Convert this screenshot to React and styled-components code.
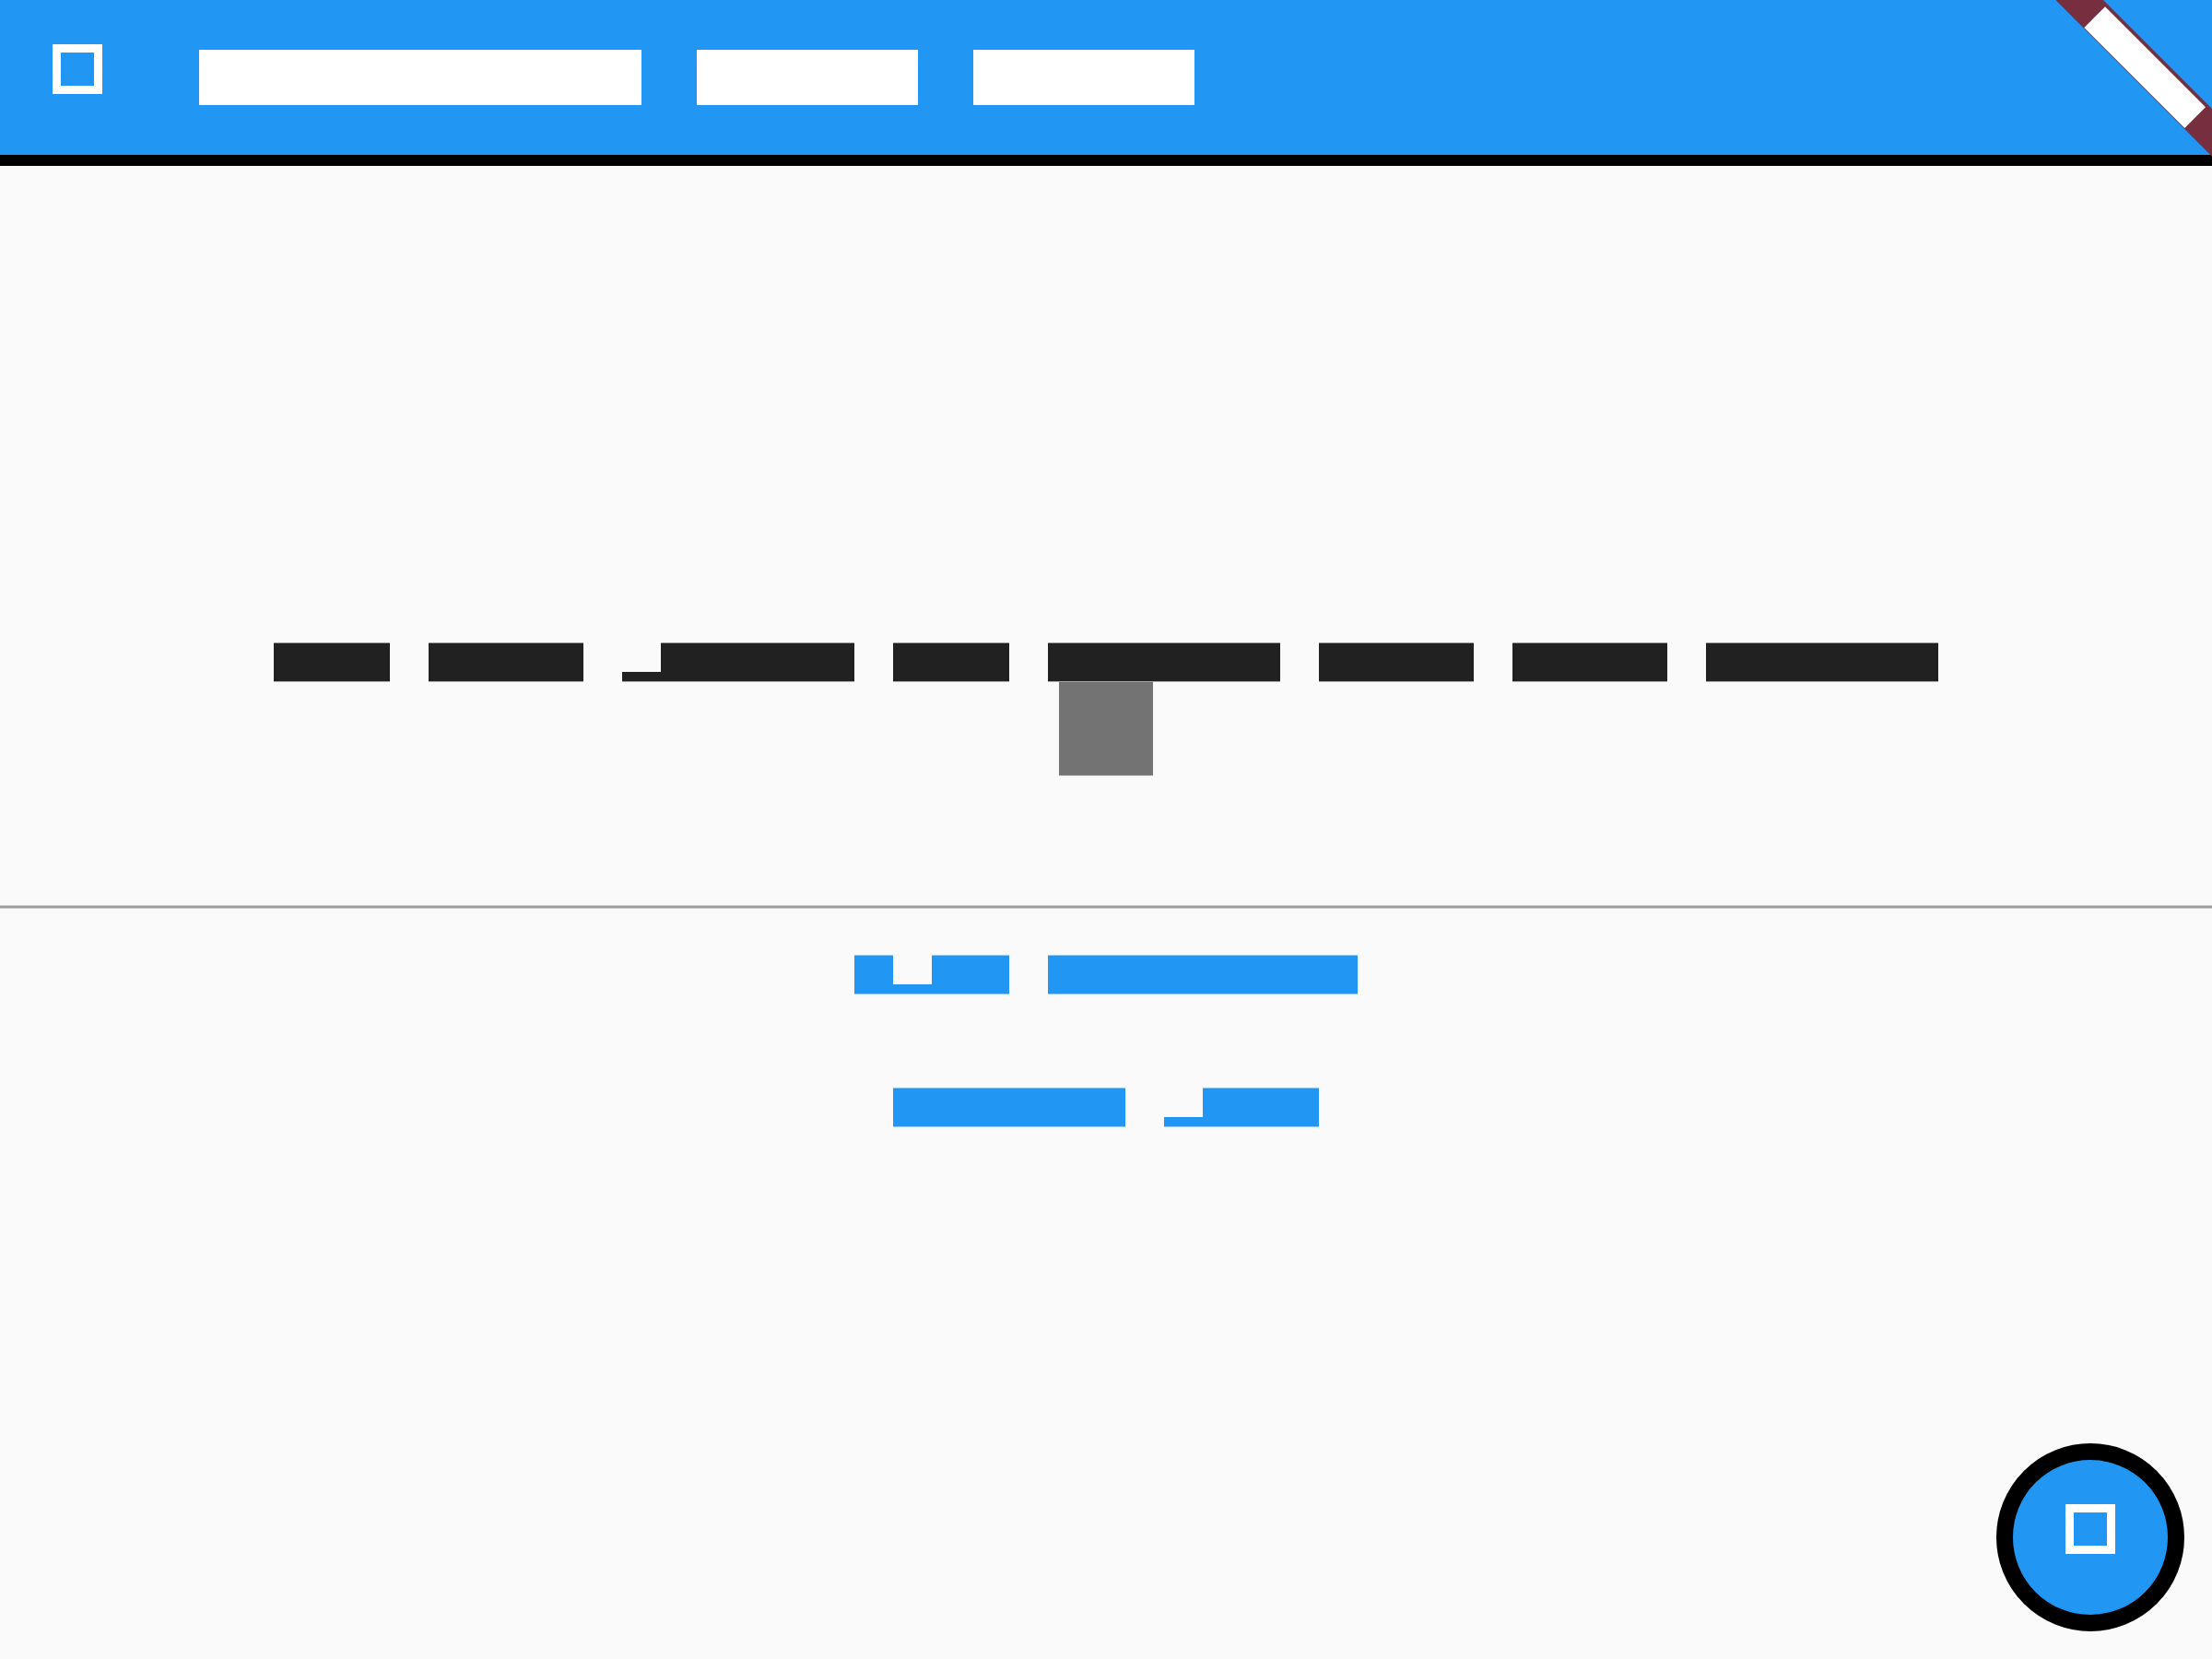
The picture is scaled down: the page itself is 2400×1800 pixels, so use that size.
import React from "react";
import styled, { createGlobalStyle, css } from "styled-components";

const color = {
  primary: "#2196f3",
  primaryEdge: "#8ec8f7",
  surface: "#fafafa",
  onSurface: "#212121",
  onSurfaceEdge: "#a0a0a0",
  counter: "#737373",
  counterEdge: "#b7b7b7",
  ribbon: "#772f40",
};

const GlobalStyle = createGlobalStyle`
  *, *::before { box-sizing: border-box; }
  body {
    margin: 0;
    background: ${color.surface};
    font-family: Roboto, "Liberation Sans", sans-serif;
  }
`;

const Page = styled.div`
  position: relative;
  display: flex;
  flex-direction: column;
  min-height: 100vh;
  overflow: hidden;
`;

const AppBar = styled.header`
  display: flex;
  align-items: center;
  height: 168px;
  background: ${color.primary};
  box-shadow: 0 12px 0 #000;
`;

const plainButton = css`
  margin: 0;
  border: 0;
  background: none;
  cursor: pointer;
`;

const NavButton = styled.button`
  ${plainButton}
  display: flex;
  justify-content: center;
  width: 168px;
  padding: 0;
`;

const IconFrame = styled.span`
  display: block;
  height: 72px;

  &::before {
    content: "";
    display: block;
    width: 54px;
    height: 54px;
    border: 9px solid #fff;
  }
`;

const Title = styled.h1`
  display: flex;
  gap: 60px;
  margin: 0;
  padding-left: 48px;
`;

const TitleWord = styled.span`
  width: ${({ $em }) => $em * 60}px;
  height: 60px;
  background: #fff;
`;

const Ribbon = styled.svg`
  position: absolute;
  top: 0;
  right: 0;
`;

const Body = styled.main`
  flex: 1;
  display: flex;
  flex-direction: column;
  align-items: center;
  justify-content: center;
  padding-top: 3px;
`;

const Line = styled.span`
  display: flex;
  justify-content: center;
  gap: 42px;
`;

const Word = styled.span`
  display: flex;
  align-items: flex-end;
`;

const Run = styled.span`
  width: ${({ $em }) => $em * 42}px;
  height: ${({ $low }) => ($low ? 11 : 43)}px;
  background: ${({ $ink }) => $ink};
  border: 0 solid ${({ $edge }) => $edge};
  border-width: ${({ $low }) => ($low ? 0 : 1)}px 0 1px;
`;

const Message = styled.p`
  margin: 0;
`;

const Counter = styled.div`
  width: 102px;
  height: 102px;
  background: ${color.counter};
  border-bottom: 1px solid ${color.counterEdge};
`;

const Divider = styled.hr`
  align-self: stretch;
  height: 4px;
  margin: 140px 0 0;
  border: 1px solid #cbcbcb;
  border-width: 1px 0;
  background: #9b9b9b;
`;

const TextButton = styled.button`
  ${plainButton}
  padding: 50px 48px 51px;
`;

const Fab = styled.button`
  ${plainButton}
  position: absolute;
  right: 30px;
  bottom: 30px;
  display: flex;
  align-items: center;
  justify-content: center;
  width: 204px;
  height: 204px;
  padding: 0;
  border: 18px solid #000;
  border-radius: 50%;
  background: ${color.primary};
`;

/* Each word is a list of runs: a positive length is full height,
   a negative one sits below the baseline. */
const MESSAGE = [[3], [4], [-1, 5], [3], [6], [4], [4], [6]];
const ACTIONS = [
  { id: "first", words: [[1, -1, 2], [8]] },
  { id: "second", words: [[6], [-1, 3]] },
];

function Blocks({ words, ink, edge }) {
  return (
    <Line>
      {words.map((runs, w) => (
        <Word key={w}>
          {runs.map((n, r) => (
            <Run key={r} $em={Math.abs(n)} $low={n < 0} $ink={ink} $edge={edge} />
          ))}
        </Word>
      ))}
    </Line>
  );
}

export default function App() {
  return (
    <>
      <GlobalStyle />
      <Page>
        <AppBar>
          <NavButton type="button" aria-label="Back">
            <IconFrame />
          </NavButton>
          <Title>
            {[8, 4, 4].map((em, i) => (
              <TitleWord key={i} $em={em} />
            ))}
          </Title>
        </AppBar>
        <Body>
          <Message>
            <Blocks words={MESSAGE} ink={color.onSurface} edge={color.onSurfaceEdge} />
          </Message>
          <Counter />
          <Divider />
          {ACTIONS.map(({ id, words }) => (
            <TextButton key={id} type="button" aria-label={id}>
              <Blocks words={words} ink={color.primary} edge={color.primaryEdge} />
            </TextButton>
          ))}
        </Body>
        <Ribbon width="170" height="170" viewBox="0 0 170 170" aria-hidden="true">
          <path d="M0.3 0H52L170 118V169.7Z" fill={color.ribbon} />
          <path d="M54 7.3L163 116.3L140.3 139L31.3 30Z" fill="#fff" />
        </Ribbon>
        <Fab type="button" aria-label="Add">
          <IconFrame />
        </Fab>
      </Page>
    </>
  );
}
